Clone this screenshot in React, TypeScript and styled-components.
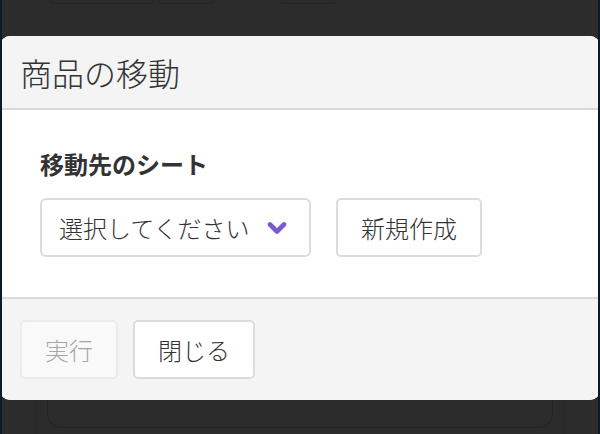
import React from "react"
import styled, { createGlobalStyle } from "styled-components"

const GlobalStyle = createGlobalStyle`
  html, body {
    margin: 0;
    padding: 0;
    background: #2c2c2c;
  }
  body {
    font-family: "Noto Sans CJK JP", "Noto Sans", sans-serif;
    color: #333;
  }
  * {
    box-sizing: border-box;
  }
`

const ChevronDown = () => (
  <svg width="20" height="14" viewBox="0 0 20 14">
    <polyline
      points="3,3.5 10,10.5 17,3.5"
      fill="none"
      stroke="#7b59d1"
      strokeWidth="4.6"
      strokeLinecap="round"
      strokeLinejoin="round"
    />
  </svg>
)

const App: React.FC = () => {
  return (
    <>
      <GlobalStyle />
      <Screen>
        <TopRow>
          <GhostButton width={104} offset={0} />
          <GhostButton width={56} offset={4} />
          <GhostButton width={58} offset={65} />
        </TopRow>
        <OuterPanel>
          <BottomCard>
            <GhostButton width={92} offset={0} />
            <GhostButton width={92} offset={74} />
          </BottomCard>
        </OuterPanel>

        <Modal>
          <Header>商品の移動</Header>
          <Body>
            <Label>移動先のシート</Label>
            <FieldRow>
              <Select>
                <span>選択してください</span>
                <ChevronDown />
              </Select>
              <Button>新規作成</Button>
            </FieldRow>
          </Body>
          <Footer>
            <Button disabled>実行</Button>
            <Button>閉じる</Button>
          </Footer>
        </Modal>
      </Screen>
    </>
  )
}

export default App

const Screen = styled.div`
  position: relative;
  width: 600px;
  height: 434px;
  overflow: hidden;
  background: #2c2c2c;
  border-left: 2px solid #0e1a29;
  border-right: 2px solid #0e1a29;
  display: flex;
  flex-direction: column;
  justify-content: space-between;
`

const TopRow = styled.div`
  display: flex;
  margin-top: -36px;
  padding-left: 48px;
`

const GhostButton = styled.div<{ width: number; offset: number }>`
  width: ${p => p.width}px;
  height: 40px;
  margin-left: ${p => p.offset}px;
  border: 1px solid #252525;
  border-radius: 4px;
`

const OuterPanel = styled.div`
  margin: 0 34px;
  padding: 0 10px 6px;
  border-left: 1px solid #282828;
  border-right: 1px solid #282828;
`

const BottomCard = styled.div`
  height: 68px;
  display: flex;
  padding-left: 180px;
  border: 1px solid #262626;
  border-top: none;
  border-radius: 0 0 14px 14px;
`

const Modal = styled.div`
  position: absolute;
  top: 36px;
  left: -2px;
  right: -2px;
  height: 364px;
  border-radius: 10px;
  overflow: hidden;
  background: #fff;
  display: flex;
  flex-direction: column;
`

const Header = styled.div`
  height: 74px;
  padding: 0 20px;
  display: flex;
  align-items: center;
  background: #f4f4f4;
  border-bottom: 2px solid #d9d9d9;
  font-size: 32px;
  font-weight: 300;
  color: #333;
`

const Body = styled.div`
  flex: 1;
  padding: 36px 40px 0;
  background: #fff;
`

const Label = styled.div`
  font-size: 24px;
  line-height: 36px;
  font-weight: 700;
  color: #333;
`

const FieldRow = styled.div`
  display: flex;
  gap: 25px;
  margin-top: 16px;
`

const Select = styled.div`
  width: 271px;
  height: 59px;
  padding: 0 22px 0 17px;
  display: flex;
  align-items: center;
  justify-content: space-between;
  border: 2px solid #dcdcdc;
  border-radius: 6px;
  background: #fff;
  font-size: 24px;
  font-weight: 300;
  color: #333;
`

const Button = styled.button`
  height: 59px;
  padding: 0 23px;
  display: inline-flex;
  align-items: center;
  border: 2px solid #dcdcdc;
  border-radius: 5px;
  background: #fff;
  font-family: inherit;
  font-size: 24px;
  font-weight: 300;
  color: #333;

  &:disabled {
    background: #f9f9f9;
    border-color: #ebebeb;
    color: #a6a6a6;
  }
`

const Footer = styled.div`
  height: 103px;
  padding: 21px 20px 0;
  display: flex;
  gap: 15px;
  background: #f4f4f4;
  border-top: 2px solid #d9d9d9;
`
